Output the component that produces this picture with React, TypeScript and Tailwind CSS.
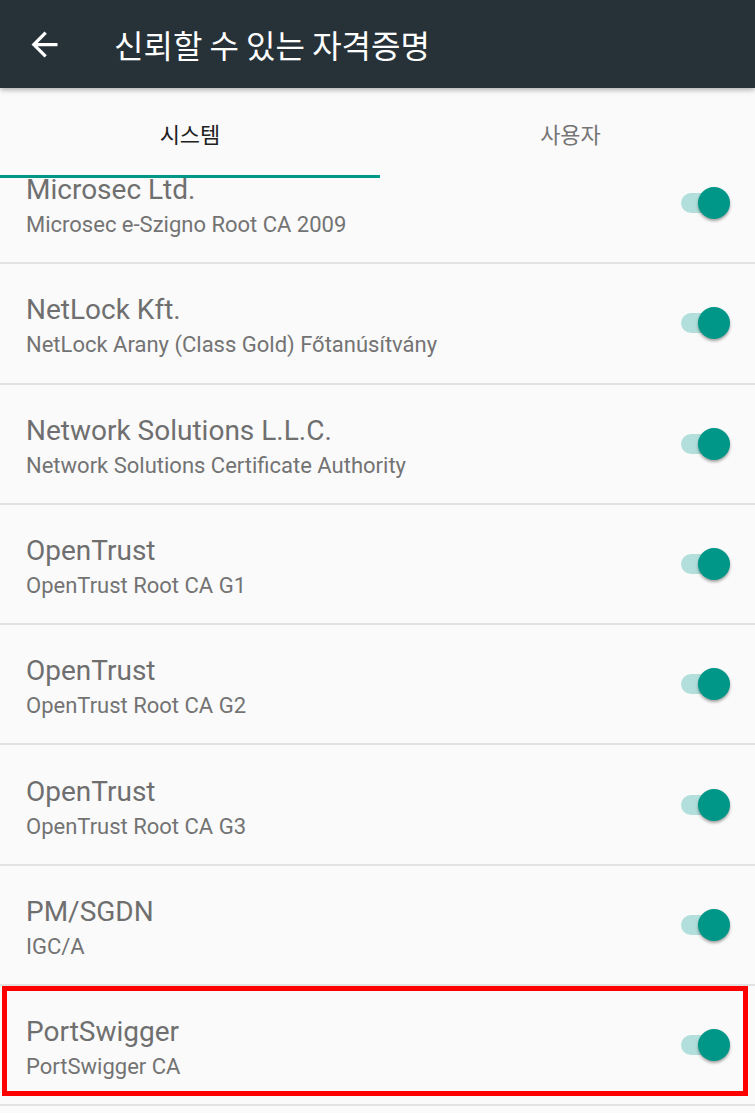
import React from "react";

const rows = [
  { t: "Microsec Ltd.", s: "Microsec e-Szigno Root CA 2009" },
  { t: "NetLock Kft.", s: "NetLock Arany (Class Gold) Főtanúsítvány" },
  { t: "Network Solutions L.L.C.", s: "Network Solutions Certificate Authority" },
  { t: "OpenTrust", s: "OpenTrust Root CA G1" },
  { t: "OpenTrust", s: "OpenTrust Root CA G2" },
  { t: "OpenTrust", s: "OpenTrust Root CA G3" },
  { t: "PM/SGDN", s: "IGC/A" },
  { t: "PortSwigger", s: "PortSwigger CA", mark: true },
];

function Toggle() {
  return (
    <div className="relative w-[49px] h-[32px] shrink-0">
      <div className="absolute left-0 top-[6px] w-[42px] h-[20px] rounded-full bg-[#b2dfdb]" />
      <div className="absolute right-0 top-0 w-[32px] h-[32px] rounded-full bg-[#009688] shadow-[0_2px_3px_rgba(0,0,0,0.35)]" />
    </div>
  );
}

export default function App() {
  return (
    <div
      className="w-[755px] h-[1113px] bg-[#fafafa] overflow-hidden flex flex-col relative"
      style={{ fontFamily: "Roboto, 'Noto Sans CJK KR', sans-serif" }}
    >
      <div className="h-[88px] bg-[#263238] flex items-center shrink-0 relative z-10 shadow-[0_2px_5px_rgba(0,0,0,0.3)]">
        <svg
          className="ml-[25px] w-[39px] h-[39px]"
          viewBox="0 0 24 24"
          fill="#ffffff"
        >
          <path d="M20 11H7.83l5.59-5.59L12 4l-8 8 8 8 1.41-1.41L7.83 13H20v-2z" />
        </svg>
        <div
          className="ml-[50px] text-white text-[32px] leading-none"
          style={{ fontFamily: "'Noto Sans CJK KR', sans-serif" }}
        >
          신뢰할 수 있는 자격증명
        </div>
      </div>
      <div
        className="h-[90px] flex shrink-0 relative bg-[#fafafa]"
        style={{ fontFamily: "'Noto Sans CJK KR', sans-serif" }}
      >
        <div className="w-[380px] flex items-center justify-center text-[22px] text-[#212121]">
          시스템
        </div>
        <div className="flex-1 flex items-center justify-center text-[22px] text-[#757575] pl-[6px]">
          사용자
        </div>
        <div className="absolute left-0 bottom-0 w-[380px] h-[3px] bg-[#009688]" />
      </div>
      <div className="flex-1 overflow-hidden">
        <div className="mt-[-34px]">
          {rows.map((r, i) => (
            <div key={i} className="h-[120.29px] flex flex-col relative">
              <div className="flex-1 flex items-center pl-[26px] pr-[25px]">
                <div className="flex-1 flex flex-col pt-[8px]">
                  <div className="text-[28px] leading-[34px] text-[#6f6f6f]">{r.t}</div>
                  <div className="mt-[2px] text-[22px] leading-[32px] text-[#737373]">{r.s}</div>
                </div>
                <Toggle />
              </div>
              <div className="h-[2px] bg-[#e2e2e2]" />
              {r.mark && (
                <div className="absolute left-[2px] top-[0px] w-[746px] h-[110px] border-[5px] border-[#ff0000]" />
              )}
            </div>
          ))}
        </div>
      </div>
    </div>
  );
}
